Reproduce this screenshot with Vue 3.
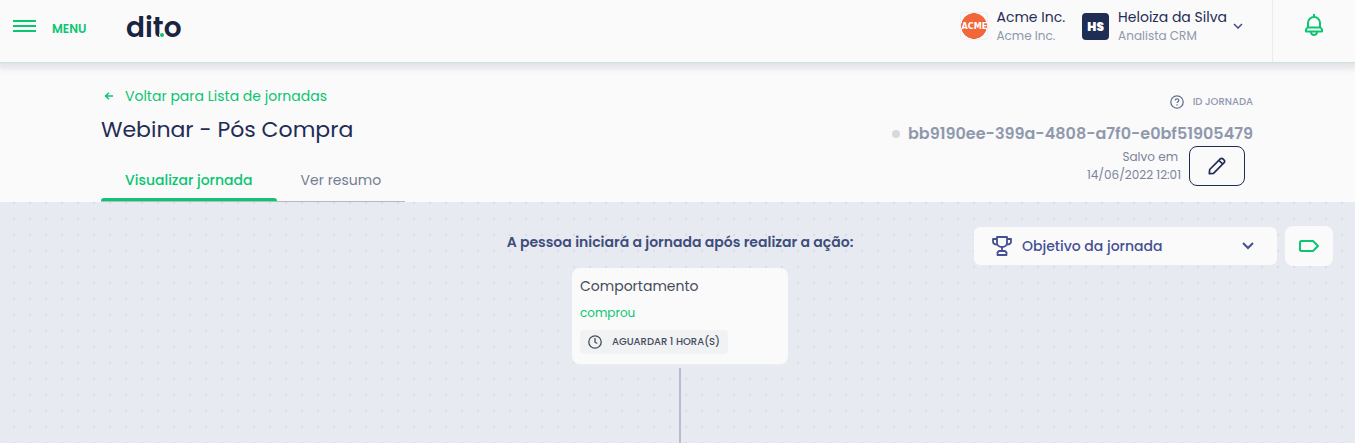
<template>
  <div class="page">
    <header class="topbar">
      <button class="menu" type="button">
        <svg class="burger" width="23" height="12" viewBox="0 0 23 12" aria-hidden="true">
          <path d="M0 1h23M0 6h23M0 11h23" stroke="currentColor" stroke-width="2" />
        </svg>
        <span>MENU</span>
      </button>

      <a class="logo" href="#" aria-label="dito">
        <svg width="60" height="48" viewBox="0 0 60 48">
          <text x="0" y="35">dito</text>
          <circle cx="36" cy="33" r="3" fill="#fafafa" />
          <circle cx="36" cy="33" r="2" fill="#0ac571" />
        </svg>
      </a>

      <div class="account">
        <span class="brand">ACME</span>
        <div class="who company">
          <strong>Acme Inc.</strong>
          <small>Acme Inc.</small>
        </div>
        <button class="user" type="button" aria-haspopup="menu">
          <span class="initials">HS</span>
          <span class="who">
            <strong>Heloiza da Silva</strong>
            <small>Analista CRM</small>
          </span>
          <svg width="10" height="6" viewBox="0 0 10 6" aria-hidden="true">
            <path d="M1 1l4 4 4-4" fill="none" stroke="#3f4a8c" stroke-width="1.5" />
          </svg>
        </button>
      </div>

      <button class="bell" type="button" aria-label="Notificações">
        <svg width="20" height="24" viewBox="0 0 20 24" fill="none" stroke="currentColor" stroke-width="2" stroke-linejoin="round">
          <path d="M10 1v3M4 14.500V10a6 6 0 0 1 12 0v4.500" />
          <path d="M3.500 14.500h13l1.500 2v2H2v-2z" />
          <path d="M7 19c.4 4 5.600 4 6 0" />
        </svg>
      </button>
    </header>

    <section class="subheader">
      <div class="wrap">
        <div class="left">
          <a class="back" href="#">
            <svg width="10" height="8" viewBox="0 0 10 8" aria-hidden="true">
              <path d="M9 4H1.500M5 .7L1.500 4 5 7.300" fill="none" stroke="currentColor" stroke-width="1.500" />
            </svg>
            Voltar para Lista de jornadas
          </a>
          <h1>Webinar - Pós Compra</h1>
          <nav class="tabs">
            <a
              v-for="tab in tabs"
              :key="tab"
              href="#"
              :class="{ active: tab === current }"
              @click.prevent="current = tab"
            >{{ tab }}</a>
          </nav>
        </div>

        <div class="right">
          <div class="idlabel">
            <svg width="14" height="14" viewBox="0 0 14 14" fill="none" stroke="#66728e" aria-hidden="true">
              <circle cx="7" cy="7" r="6.200" stroke-width="1.300" />
              <path d="M5.300 5.600c0-2.200 3.500-2.200 3.500-.2 0 1.300-1.700 1.300-1.700 2.600M7.100 9.200v1.300" stroke-width="1.300" />
            </svg>
            <span>ID JORNADA</span>
          </div>
          <div class="idvalue"><i class="dot"></i>bb9190ee-399a-4808-a7f0-e0bf51905479</div>
          <div class="saved">
            <p><span>Salvo em</span><time>14/06/2022 12:01</time></p>
            <button class="edit" type="button" aria-label="Editar">
              <svg width="18" height="18" viewBox="0 0 18 18" fill="none" stroke="#1f2d55" stroke-width="1.700" stroke-linejoin="round" aria-hidden="true">
                <path d="M1.300 16.700l.4-4.200L12.300 1.900a1.800 1.800 0 0 1 2.600 0l1.200 1.200a1.800 1.800 0 0 1 0 2.600L5.500 16.300zM11 3.300L14.700 7" />
              </svg>
            </button>
          </div>
        </div>
      </div>
    </section>

    <main class="canvas">
      <div class="flow">
        <h2>A pessoa iniciará a jornada após realizar a ação:</h2>
        <article class="card">
          <h3>Comportamento</h3>
          <p>comprou</p>
          <span class="chip">
            <svg width="14" height="14" viewBox="0 0 14 14" fill="none" stroke="#454b5c" stroke-width="1.300" aria-hidden="true">
              <circle cx="7" cy="7" r="6.200" />
              <path d="M7 3v4.200l2.300 1.300" />
            </svg>
            AGUARDAR 1 HORA(S)
          </span>
        </article>
        <div class="line"></div>
      </div>

      <div class="tools">
        <label class="goal">
          <svg width="20" height="20" viewBox="0 0 20 20" fill="none" stroke="#454f94" stroke-width="1.800" stroke-linejoin="round" aria-hidden="true">
            <path d="M5 1h10v6c0 2-2 4-5 4S5 9 5 7z" />
            <path d="M5 3H1v2.500C1 7.500 3 8.500 5.300 8.500M15 3h4v2.500c0 2-2 3-4.300 3M10 11v4M5.500 19v-2.500L7 15h6l1.500 1.500V19z" />
          </svg>
          <select v-model="goal" aria-label="Objetivo da jornada">
            <option>Objetivo da jornada</option>
          </select>
          <svg width="12" height="8" viewBox="0 0 12 8" aria-hidden="true">
            <path d="M1 1l5 5 5-5" fill="none" stroke="#454f94" stroke-width="2" />
          </svg>
        </label>
        <button class="tag" type="button" aria-label="Etiquetas">
          <svg width="20" height="12" viewBox="0 0 20 12" fill="none" stroke="#0ac571" stroke-width="2" stroke-linejoin="round" aria-hidden="true">
            <path d="M2.500 1H14l5 5-5 5H2.500A1.500 1.500 0 0 1 1 9.500v-7A1.500 1.500 0 0 1 2.500 1z" />
          </svg>
        </button>
      </div>
    </main>
  </div>
</template>

<script setup>
import { ref } from 'vue'

const tabs = ['Visualizar jornada', 'Ver resumo']
const current = ref(tabs[0])
const goal = ref('Objetivo da jornada')
</script>

<style>
body {
  margin: 0;
}
</style>

<style scoped>
* {
  box-sizing: border-box;
}

.page {
  min-height: 100vh;
  display: flex;
  flex-direction: column;
  background: #fafafa;
  font-family: Poppins, Inter, sans-serif;
  color: #1f2d55;
}

button {
  border: 0;
  padding: 0;
  background: none;
  font: inherit;
  color: inherit;
  cursor: pointer;
}

a {
  text-decoration: none;
}

h1, h2, h3, p {
  margin: 0;
}

/* top bar */
.topbar {
  height: 62px;
  display: flex;
  align-items: flex-start;
  background: #fafafa;
  box-shadow: 0 1px 1px #cfdfe2, 0 5px 6px 2px #e4e5e9;
  z-index: 1;
}

.menu {
  display: flex;
  align-items: flex-start;
  gap: 16px;
  padding: 20px 0 0 13px;
  color: #0ac571;
  font-size: 12px;
  line-height: 18px;
  font-weight: 600;
}

.logo {
  margin: 2px 0 0 40px;
}

.logo svg {
  display: block;
}

.logo text {
  font: 600 28px Poppins, Inter, sans-serif;
  fill: #1a2440;
}

.account {
  display: flex;
  align-items: center;
  margin-left: auto;
  padding-top: 7px;
}

.brand {
  width: 28px;
  height: 28px;
  border: 1px solid #eef0f5;
  border-radius: 4px;
  display: flex;
  align-items: center;
  justify-content: center;
  margin-right: 8px;
  background: radial-gradient(circle closest-side, #f2673a 97%, transparent);
  color: #fff;
  font-family: "DejaVu Sans Condensed", "DejaVu Sans", sans-serif;
  font-size: 9px;
  font-weight: 700;
}

.company {
  margin-right: 17px;
}

.who {
  display: flex;
  flex-direction: column;
  text-align: left;
}

.who strong {
  font-size: 14px;
  line-height: 20px;
  font-weight: 400;
}

.who small {
  font-size: 12px;
  line-height: 18px;
  color: #8f98ad;
}

.user {
  display: flex;
  align-items: center;
}

.initials {
  width: 27px;
  height: 27px;
  border-radius: 4px;
  margin-right: 9px;
  background: #1f2d55;
  color: #fff;
  font-size: 12px;
  line-height: 27px;
  font-weight: 900;
}

.user svg {
  margin-left: 6px;
}

.bell {
  width: 83px;
  height: 100%;
  margin-left: 29px;
  padding-bottom: 12px;
  border-left: 1px solid #ececf0;
  color: #0ac571;
}

.bell svg {
  display: block;
  margin: auto;
}

/* journey header */
.wrap {
  display: flex;
  justify-content: space-between;
  padding: 0 102px 0 101px;
}

.left {
  padding-top: 24px;
}

.back {
  display: flex;
  align-items: center;
  gap: 11px;
  padding-left: 3px;
  color: #0ac571;
  font-size: 14px;
  line-height: 20px;
}

h1 {
  margin-top: 8px;
  font-size: 22px;
  line-height: 32px;
  font-weight: 400;
}

.tabs {
  display: flex;
  width: fit-content;
  margin-top: 12px;
  box-shadow: inset 0 -1px #b4b9c4;
}

.tabs a {
  position: relative;
  padding: 12px 24px;
  font-size: 14px;
  line-height: 20px;
  color: #747d93;
}

.tabs .active {
  color: #0ac571;
  font-weight: 500;
}

.tabs .active::after {
  content: "";
  position: absolute;
  left: 0;
  right: 0;
  bottom: 1px;
  height: 3px;
  border-radius: 3px 3px 0 0;
  background: #0ac571;
}

.right {
  display: flex;
  flex-direction: column;
  align-items: flex-end;
  padding-top: 30px;
  color: #8f98ad;
}

.idlabel {
  display: flex;
  align-items: center;
  gap: 9px;
  font-size: 10px;
  line-height: 20px;
  font-weight: 500;
}

.idvalue {
  display: flex;
  align-items: center;
  gap: 8px;
  margin-top: 10px;
  font-size: 16px;
  line-height: 24px;
  font-weight: 600;
}

.dot {
  width: 8px;
  height: 8px;
  border-radius: 50%;
  background: #d8d9df;
}

.saved {
  display: flex;
  align-items: center;
  gap: 8px;
  padding-right: 8px;
}

.saved p {
  display: flex;
  flex-direction: column;
  align-items: flex-end;
  font-size: 12px;
  line-height: 18px;
  color: #7b849a;
}

.saved span {
  padding-right: 3px;
}

.edit {
  width: 56px;
  height: 40px;
  border: 1px solid #1f2d55;
  border-radius: 8px;
}

.edit svg {
  display: block;
  margin: auto;
}

/* dotted canvas */
.canvas {
  flex: 1;
  display: grid;
  grid-template-columns: 1fr auto 1fr;
  padding: 24px 22px 0 27px;
  background-color: #e7eaf0;
  background-image: conic-gradient(from 90deg at 14px 14px, #d9dce3 90deg, transparent 0);
  background-size: 16px 16px;
  background-position: -1px 2px;
}

.flow {
  grid-column: 2;
  display: flex;
  flex-direction: column;
  align-items: center;
}

h2 {
  font-size: 14px;
  line-height: 32px;
  font-weight: 600;
  color: #3e4d7c;
}

.card {
  width: 216px;
  margin-top: 10px;
  padding: 8px 8px 10px;
  border-radius: 8px;
  background: #fafafa;
  box-shadow: 0 1px 2px #edeff4;
}

h3 {
  font-size: 14px;
  line-height: 20px;
  font-weight: 400;
  color: #454b5c;
}

.card p {
  margin: 6px 0;
  font-size: 12px;
  line-height: 22px;
  color: #0ac571;
}

.chip {
  display: flex;
  align-items: center;
  gap: 10px;
  width: fit-content;
  padding: 0 8px;
  border-radius: 4px;
  background: #f0f2f3;
  font-size: 10px;
  line-height: 24px;
  font-weight: 500;
  color: #454b5c;
}

.line {
  flex: 1;
  width: 2px;
  margin-top: 4px;
  background: #b9bccd;
}

.tools {
  display: flex;
  align-items: center;
  justify-content: flex-end;
  gap: 8px;
  height: 40px;
}

.goal {
  width: 303px;
  height: 38px;
  display: flex;
  align-items: center;
  gap: 10px;
  padding: 0 23px 0 18px;
  border-radius: 6px;
  background: #fafafa;
}

.goal select {
  flex: 1;
  appearance: none;
  border: 0;
  padding: 0;
  background: none;
  font: inherit;
  font-size: 14px;
  line-height: 20px;
  font-weight: 500;
  color: #454f94;
}

.tag {
  width: 48px;
  height: 40px;
  border-radius: 8px;
  background: #fafafa;
}

.tag svg {
  display: block;
  margin: auto;
}
</style>
